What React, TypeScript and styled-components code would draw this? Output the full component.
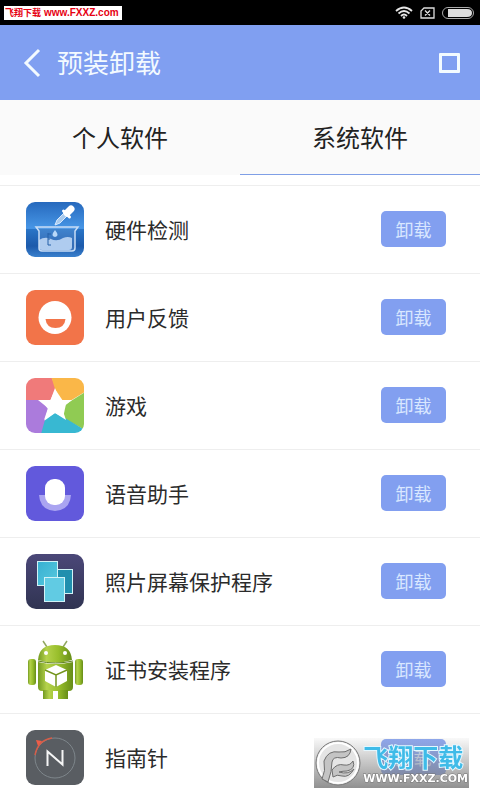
import React from "react";
import styled, { createGlobalStyle } from "styled-components";

const GlobalStyle = createGlobalStyle`
  * { box-sizing: border-box; }
  body {
    margin: 0;
    background: #fff;
    font-family: "Noto Sans CJK SC", sans-serif;
    color: #2b2b2b;
  }
  button { font-family: inherit; border: 0; padding: 0; cursor: pointer; }
`;

const Screen = styled.div`
  height: 100vh;
  display: flex;
  flex-direction: column;
  overflow: hidden;
`;

const StatusBar = styled.div`
  flex: none;
  height: 25px;
  padding: 0 6px 0 4px;
  background: #000;
  display: flex;
  align-items: center;
  justify-content: space-between;
`;

const SiteTag = styled.div`
  display: flex;
  align-items: center;
  gap: 3px;
  height: 14px;
  padding: 0 3px 0 1px;
  background: #fff;
  color: #e60012;
  font-size: 9px;
  line-height: 14px;
  font-weight: 700;
`;

const SiteAddress = styled.span`
  font-family: "Liberation Sans", sans-serif;
  font-size: 10px;
`;

const StatusIcons = styled.div`
  display: flex;
  align-items: center;
  gap: 7px;
`;

const Header = styled.header`
  flex: none;
  height: 75px;
  padding: 0 20px 0 22px;
  background: #809ff1;
  color: #f3faff;
  display: flex;
  align-items: center;
`;

const BackButton = styled.button`
  display: flex;
  background: none;
  color: inherit;
`;

const Title = styled.h1`
  flex: 1;
  margin: 0 0 0 15px;
  padding-bottom: 2px;
  font-size: 26px;
  line-height: 36px;
  font-weight: 400;
`;

const SelectAll = styled.input`
  appearance: none;
  width: 21px;
  height: 20px;
  margin: 0;
  border: 3px solid #f3fbff;
  border-radius: 1px;
`;

const Tabs = styled.div`
  flex: none;
  display: grid;
  grid-template-columns: 1fr 1fr;
  background: #fafafa;
`;

const Tab = styled.button<{ $active?: boolean }>`
  height: 75px;
  padding-bottom: 2px;
  background: none;
  border-bottom: 1px solid ${(p) => (p.$active ? "#7f9fe6" : "#fafafa")};
  color: #222;
  font-size: 24px;
`;

const List = styled.ul`
  flex: 1;
  min-height: 0;
  overflow: hidden;
  margin: 10px 0 0;
  padding: 0;
  list-style: none;
`;

const Row = styled.li`
  display: flex;
  align-items: center;
  height: 88px;
  padding: 0 34px 2px 25px;
  border-top: 1px solid #eeeeee;
`;

const AppIcon = styled.svg`
  flex: none;
  width: 60px;
  height: 60px;
`;

const AppName = styled.span`
  flex: 1;
  margin-left: 20px;
  font-size: 21px;
  line-height: 32px;
`;

const UninstallButton = styled.button`
  width: 65px;
  height: 36px;
  border-radius: 5px;
  background: #829ff0;
  color: #d9e7ff;
  font-size: 18px;
`;

const Watermark = styled.div`
  position: fixed;
  right: 11px;
  bottom: 12px;
  height: 50px;
  padding: 0 1px;
  display: flex;
  align-items: center;
  gap: 2px;
  background: linear-gradient(rgba(215, 215, 215, 0.15), rgba(125, 125, 125, 0.85));
`;

const WatermarkText = styled.div`
  display: flex;
  flex-direction: column;
`;

const WatermarkName = styled.span`
  font-size: 25px;
  line-height: 32px;
  font-weight: 700;
  color: #3fbbe8;
  paint-order: stroke fill;
  -webkit-text-stroke: 2px #e4f7ff;
`;

const WatermarkUrl = styled.span`
  font-family: "DejaVu Sans", sans-serif;
  font-size: 11px;
  line-height: 14px;
  font-weight: 700;
  color: #fff;
  paint-order: stroke fill;
  -webkit-text-stroke: 1px #777;
`;

const HardwareIcon = () => (
  <>
    <defs>
      <linearGradient id="hw" x1="0" y1="0" x2="0" y2="1">
        <stop offset="0" stopColor="#2669bd" />
        <stop offset=".48" stopColor="#4796e6" />
        <stop offset=".5" stopColor="#2974c6" />
        <stop offset=".8" stopColor="#1c5aab" />
        <stop offset="1" stopColor="#3980cd" />
      </linearGradient>
    </defs>
    <rect x="1" y="2" width="58" height="55" rx="9" fill="url(#hw)" />
    <path d="M14 40q6-4 12-1t12-1q5-2 9 0v9q0 3-3 3H17q-3 0-3-3z" fill="#a9c8ed" />
    <path d="M11 27h42l-3 4v17q0 3-3 3H17q-3 0-3-3V31z" fill="#d7e9ff" fillOpacity=".13" stroke="#c8ddf6" strokeWidth="1.5" />
    <path d="M23 33v12m0-11h3m-3 5h2m-2 6h3" fill="none" stroke="#2461a8" />
    <path d="M30 30q-5 6 0 7 5-1 0-7z" fill="#b9d8f8" />
    <path d="M30 25l2-5 8-8 3 3-8 8z" fill="#a8caed" stroke="#d9eaff" />
    <path d="M38.500 11l6 6" stroke="#fff" strokeWidth="3" strokeLinecap="round" />
    <path d="M42 13l4-4" stroke="#fff" strokeWidth="7" strokeLinecap="round" />
  </>
);

const FeedbackIcon = () => (
  <>
    <rect x="1" y="2" width="58" height="55" rx="9" fill="#f27449" />
    <circle cx="30" cy="29.500" r="16.500" fill="#fff" />
    <path d="M20.500 31h20q-1 9-10 9t-10-9z" fill="#f27449" />
  </>
);

const GamesIcon = () => (
  <>
    <defs>
      <clipPath id="games"><rect x="1" y="2" width="58" height="55" rx="9" /></clipPath>
    </defs>
    <g clipPath="url(#games)">
      <path d="M0 0h26l5 12-6 13H0z" fill="#f07a7a" />
      <path d="M26 0h34v16L40 28 30 13z" fill="#fab748" />
      <path d="M60 16v38L38 42l3-14z" fill="#90cb53" />
      <path d="M60 54v6H14l5-15 11-8 10 5z" fill="#38b8d2" />
      <path d="M0 24h16l7 9-7 25H0z" fill="#ab7bdc" />
    </g>
    <path d="M30 12l4.500 12H47l-10 8 4 12-11-7-11 7 4-12-10-8h12.500z" fill="#fff" />
  </>
);

const VoiceIcon = () => (
  <>
    <rect x="1" y="2" width="58" height="55" rx="9" fill="#6259dc" />
    <path d="M14 31h32q-1 15-16 16Q15 46 14 31z" fill="#aaa4f1" />
    <rect x="20" y="15" width="20" height="26" rx="9" fill="#fff" />
  </>
);

const PhotoIcon = () => (
  <>
    <defs>
      <linearGradient id="photoBg" x1="0" y1="0" x2="0" y2="1">
        <stop stopColor="#4b4778" /><stop offset="1" stopColor="#303452" />
      </linearGradient>
      <linearGradient id="photo" x1="0" y1="0" x2="1" y2="1">
        <stop stopColor="#37b0d2" /><stop offset="1" stopColor="#58c9de" />
      </linearGradient>
    </defs>
    <rect x="1" y="2" width="58" height="55" rx="10" fill="url(#photoBg)" />
    <g stroke="#d2f3f7">
      <rect x="28.500" y="17.500" width="19" height="24" fill="#208fae" />
      <rect x="12.500" y="9.500" width="20" height="24" fill="url(#photo)" />
      <rect x="19.500" y="25.500" width="20" height="24" fill="#61cbe3" />
    </g>
  </>
);

const AndroidIcon = () => (
  <>
    <defs>
      <linearGradient id="droid" x1="0" y1="0" x2="1" y2="0">
        <stop stopColor="#739a20" /><stop offset=".25" stopColor="#b5d24c" />
        <stop offset=".6" stopColor="#98be2b" /><stop offset="1" stopColor="#668d18" />
      </linearGradient>
    </defs>
    <path d="M18 1l4 6M42 1l-4 6" stroke="#91a760" strokeWidth="1.500" />
    <g fill="url(#droid)">
      <path d="M13 20Q14 5 30 5t17 15q-17 5-34 0z" />
      <path d="M13 22q17 4 35 0v25q0 4-4 4H17q-4 0-4-4z" />
      <rect x="3" y="19" width="8" height="26" rx="3" />
      <rect x="50" y="19" width="8" height="26" rx="3" />
      <path d="M18 50h10v9q-5 3-10 0zM33 50h10v9q-5 3-10 0z" />
    </g>
    <path d="M13 21q17 4 35 0" fill="none" stroke="#5f811b" />
    <circle cx="21" cy="13" r="2" fill="#fff" /><circle cx="40" cy="13" r="2" fill="#fff" />
    <path d="M31 25l11 5v11l-11 6-11-6V30z" fill="#fff" />
    <path d="M20 30l11 5 11-5M31 35v12" fill="none" stroke="#74951d" strokeWidth="1.500" />
  </>
);

const CompassIcon = () => (
  <>
    <rect x="1" y="2" width="58" height="55" rx="9" fill="#595d62" />
    <circle cx="30" cy="30" r="20" fill="none" stroke="#7e868b" />
    <path d="M10 27Q13 12 27 10" fill="none" stroke="#d75d48" strokeWidth="1.500" />
    <path d="M11 12l6 1-4 5z" fill="#ef5d48" />
    <path d="M22.500 38V23.500l15 13V22" fill="none" stroke="#f5f5f5" strokeWidth="2" />
  </>
);

const APPS = [
  { name: "硬件检测", Icon: HardwareIcon },
  { name: "用户反馈", Icon: FeedbackIcon },
  { name: "游戏", Icon: GamesIcon },
  { name: "语音助手", Icon: VoiceIcon },
  { name: "照片屏幕保护程序", Icon: PhotoIcon },
  { name: "证书安装程序", Icon: AndroidIcon },
  { name: "指南针", Icon: CompassIcon },
];

export default function App() {
  return (
    <Screen>
      <GlobalStyle />
      <StatusBar>
        <SiteTag>飞翔下载<SiteAddress>www.FXXZ.com</SiteAddress></SiteTag>
        <StatusIcons>
          <svg width="18" height="13" viewBox="0 0 18 13" fill="none" stroke="#e6e6e6" strokeWidth="1.800">
            <path d="M1 5q8-7 16 0M3.500 7.500q5.500-5 11 0M6 10q3-3 6 0" />
            <circle cx="9" cy="11.500" r="1.300" fill="#e6e6e6" stroke="none" />
          </svg>
          <svg width="15" height="12" viewBox="0 0 15 12" fill="none" stroke="#ddd" strokeWidth="1.300">
            <path d="M4 1h10v10H1V4zM5 3.500l5 5m0-5l-5 5" />
          </svg>
          <svg width="32" height="12" viewBox="0 0 32 12">
            <rect x=".5" y=".5" width="31" height="11" rx="5.500" fill="none" stroke="#aaa" />
            <path d="M6 2h19q5 0 5 4t-5 4H6z" fill="#ddd" />
          </svg>
        </StatusIcons>
      </StatusBar>
      <Header>
        <BackButton aria-label="返回">
          <svg width="20" height="30" viewBox="0 0 20 30" fill="none" stroke="currentColor" strokeWidth="3">
            <path d="M17 2L4 15l13 13" />
          </svg>
        </BackButton>
        <Title>预装卸载</Title>
        <SelectAll type="checkbox" aria-label="全选" />
      </Header>
      <Tabs role="tablist">
        <Tab role="tab" aria-selected={false}>个人软件</Tab>
        <Tab role="tab" aria-selected $active>系统软件</Tab>
      </Tabs>
      <List>
        {APPS.map(({ name, Icon }) => (
          <Row key={name}>
            <AppIcon viewBox="0 -1 60 60" aria-hidden="true"><Icon /></AppIcon>
            <AppName>{name}</AppName>
            <UninstallButton aria-label={"卸载 " + name}>卸载</UninstallButton>
          </Row>
        ))}
      </List>
      <Watermark>
        <svg width="46" height="48" viewBox="0 0 46 48">
          <circle cx="23" cy="24" r="22" fill="#e5e5e5" stroke="#777" />
          <circle cx="23" cy="24" r="20" fill="none" stroke="#fff" strokeWidth="2" />
          <g fill="#c4c4c4" stroke="#6d6d6d">
            <path d="M7 40Q11 32 9 22q4-11 15-9 6 1 12-3-1 9-10 9-8-2-9 4 0 9-4 20z" />
            <path d="M17 31q5-7 12-5 6 1 9-4 3 8-6 10-4 0-8 1 9 3 15-3-5 9-12 7-5-2-9 1z" />
          </g>
        </svg>
        <WatermarkText>
          <WatermarkName>飞翔下载</WatermarkName>
          <WatermarkUrl>WWW.FXXZ.COM</WatermarkUrl>
        </WatermarkText>
      </Watermark>
    </Screen>
  );
}
